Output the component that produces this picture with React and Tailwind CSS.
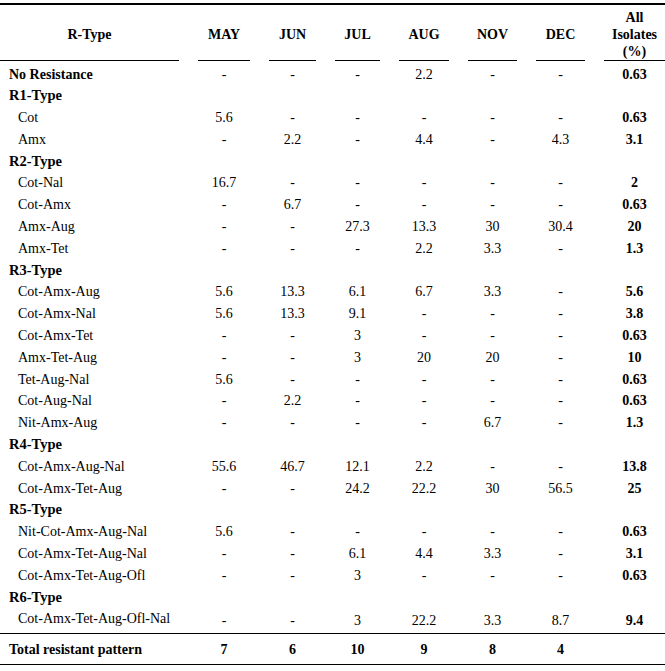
import React from 'react'

const months = ['MAY', 'JUN', 'JUL', 'AUG', 'NOV', 'DEC']

const rows = [
  { label: 'No Resistance', bold: true, v: ['-', '-', '-', '2.2', '-', '-', '0.63'] },
  { group: 'R1-Type' },
  { label: 'Cot', v: ['5.6', '-', '-', '-', '-', '-', '0.63'] },
  { label: 'Amx', v: ['-', '2.2', '-', '4.4', '-', '4.3', '3.1'] },
  { group: 'R2-Type' },
  { label: 'Cot-Nal', v: ['16.7', '-', '-', '-', '-', '-', '2'] },
  { label: 'Cot-Amx', v: ['-', '6.7', '-', '-', '-', '-', '0.63'] },
  { label: 'Amx-Aug', v: ['-', '-', '27.3', '13.3', '30', '30.4', '20'] },
  { label: 'Amx-Tet', v: ['-', '-', '-', '2.2', '3.3', '-', '1.3'] },
  { group: 'R3-Type' },
  { label: 'Cot-Amx-Aug', v: ['5.6', '13.3', '6.1', '6.7', '3.3', '-', '5.6'] },
  { label: 'Cot-Amx-Nal', v: ['5.6', '13.3', '9.1', '-', '-', '-', '3.8'] },
  { label: 'Cot-Amx-Tet', v: ['-', '-', '3', '-', '-', '-', '0.63'] },
  { label: 'Amx-Tet-Aug', v: ['-', '-', '3', '20', '20', '-', '10'] },
  { label: 'Tet-Aug-Nal', v: ['5.6', '-', '-', '-', '-', '-', '0.63'] },
  { label: 'Cot-Aug-Nal', v: ['-', '2.2', '-', '-', '-', '-', '0.63'] },
  { label: 'Nit-Amx-Aug', v: ['-', '-', '-', '-', '6.7', '-', '1.3'] },
  { group: 'R4-Type' },
  { label: 'Cot-Amx-Aug-Nal', v: ['55.6', '46.7', '12.1', '2.2', '-', '-', '13.8'] },
  { label: 'Cot-Amx-Tet-Aug', v: ['-', '-', '24.2', '22.2', '30', '56.5', '25'] },
  { group: 'R5-Type' },
  { label: 'Nit-Cot-Amx-Aug-Nal', v: ['5.6', '-', '-', '-', '-', '-', '0.63'] },
  { label: 'Cot-Amx-Tet-Aug-Nal', v: ['-', '-', '6.1', '4.4', '3.3', '-', '3.1'] },
  { label: 'Cot-Amx-Tet-Aug-Ofl', v: ['-', '-', '3', '-', '-', '-', '0.63'] },
  { group: 'R6-Type' },
  { label: 'Cot-Amx-Tet-Aug-Ofl-Nal', v: ['-', '-', '3', '22.2', '3.3', '8.7', '9.4'], low: true },
]

const cols = 'grid grid-cols-[179px_52px_47px_45px_50px_49px_49px_61px] gap-x-[19px]'

const App = () => {
  return (
    <div className="w-[665px] bg-white pt-[3px] text-black text-[14px] leading-[21.8px] font-['Liberation_Serif',serif]">
      <div className="border-t-2 border-black">
        {/* Header */}
        <div className={`${cols} h-[56px] font-bold leading-[17px]`}>
          <div className="flex items-center justify-center border-b border-black pt-[3px]">R-Type</div>
          {months.map((m) => (
            <div key={m} className="flex items-center justify-center border-b border-black pt-[3px]">
              {m}
            </div>
          ))}
          <div className="flex items-center justify-center text-center border-b border-black pt-[3px]">
            All<br />Isolates<br />(%)
          </div>
        </div>

        {/* Body */}
        <div className="pt-[2.5px] pb-[3px] border-b border-black">
          {rows.map((r, i) =>
            r.group ? (
              <div key={i} className="h-[21.8px] pl-[9px] font-bold text-[14.5px]">{r.group}</div>
            ) : (
              <div key={i} className={`${cols} h-[21.8px]`}>
                <div className={r.bold ? 'pl-[9px] font-bold' : 'pl-[18px]'}>{r.label}</div>
                {r.v.map((val, j) => (
                  <div
                    key={j}
                    className={`text-center ${j === 6 ? 'font-bold' : ''} ${r.low ? 'pt-[2px]' : ''}`}
                  >
                    {val}
                  </div>
                ))}
              </div>
            )
          )}
        </div>

        {/* Total */}
        <div className={`${cols} h-[31px] pt-[2px] items-center font-bold border-b border-black`}>
          <div className="pl-[9px]">Total resistant pattern</div>
          {['7', '6', '10', '9', '8', '4', ''].map((val, j) => (
            <div key={j} className="text-center">{val}</div>
          ))}
        </div>
      </div>
    </div>
  )
}

export default App
